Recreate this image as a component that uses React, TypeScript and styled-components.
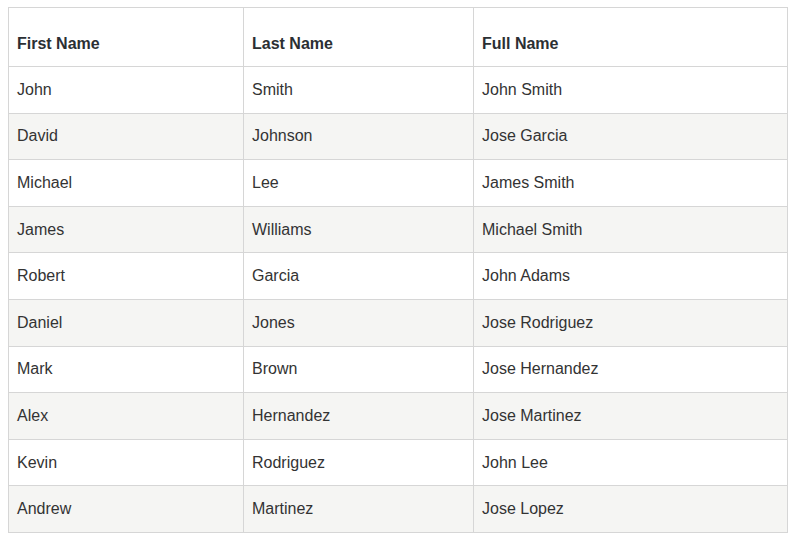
import { createGlobalStyle } from 'styled-components';
import styled from 'styled-components';

const GlobalStyle = createGlobalStyle`
  body {
    margin: 7px 8px;
    background: #fff;
    font-family: "Liberation Sans", Arial, sans-serif;
  }
`;

const Table = styled.table`
  width: 779px;
  border-collapse: collapse;
  table-layout: fixed;
  font-size: 16px;
  line-height: 24px;
  color: #333;
`;

const HeadCell = styled.th<{ $width: number }>`
  width: ${(p) => p.$width}px;
  height: 59px;
  box-sizing: border-box;
  padding: 0 8px 10px;
  vertical-align: bottom;
  text-align: left;
  font-weight: bold;
  color: #2b2f33;
  border: 1px solid #d6d6d6;
`;

const Row = styled.tr<{ $striped: boolean }>`
  background: ${(p) => (p.$striped ? '#f5f5f3' : '#fff')};
`;

const Cell = styled.td`
  padding: 10.8px 8px;
  border: 1px solid #d6d6d6;
  vertical-align: top;
`;

const people = [
  ['John', 'Smith', 'John Smith'],
  ['David', 'Johnson', 'Jose Garcia'],
  ['Michael', 'Lee', 'James Smith'],
  ['James', 'Williams', 'Michael Smith'],
  ['Robert', 'Garcia', 'John Adams'],
  ['Daniel', 'Jones', 'Jose Rodriguez'],
  ['Mark', 'Brown', 'Jose Hernandez'],
  ['Alex', 'Hernandez', 'Jose Martinez'],
  ['Kevin', 'Rodriguez', 'John Lee'],
  ['Andrew', 'Martinez', 'Jose Lopez'],
];

const App = () => (
  <>
    <GlobalStyle />
    <Table>
      <thead>
        <tr>
          <HeadCell $width={235}>First Name</HeadCell>
          <HeadCell $width={230}>Last Name</HeadCell>
          <HeadCell $width={314}>Full Name</HeadCell>
        </tr>
      </thead>
      <tbody>
        {people.map((p, i) => (
          <Row key={i} $striped={i % 2 === 1}>
            <Cell>{p[0]}</Cell>
            <Cell>{p[1]}</Cell>
            <Cell>{p[2]}</Cell>
          </Row>
        ))}
      </tbody>
    </Table>
  </>
);

export default App;
